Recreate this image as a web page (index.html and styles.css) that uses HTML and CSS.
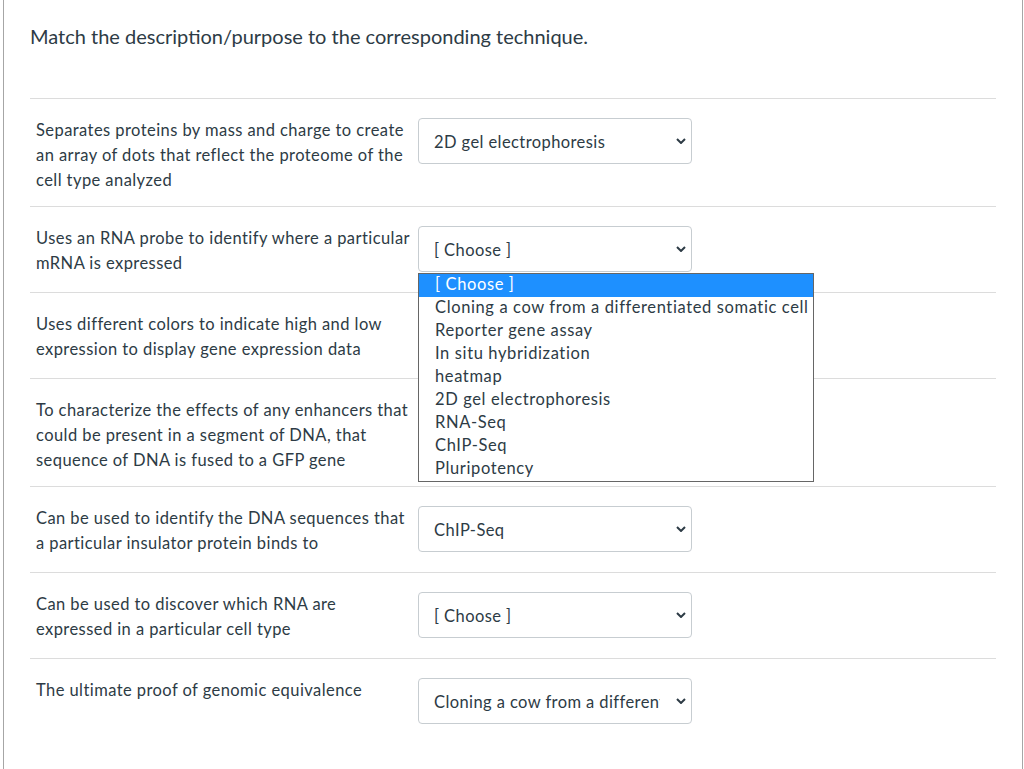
FILE: index.html
```html
<!DOCTYPE html>
<html lang="en">
<head>
<meta charset="utf-8">
<title>Matching question</title>
<link rel="stylesheet" href="styles.css">
</head>
<body>
<div class="page">
  <div class="question-text">Match the description/purpose to the corresponding technique.</div>
  <div class="answers">
    <div class="answer">
      <div class="answer-label">Separates proteins by mass and charge to create an array of dots that reflect the proteome of the cell type analyzed</div>
      <div class="select-wrap">
        <div class="select"><span class="select-value">2D gel electrophoresis</span><svg class="chevron" width="10" height="6" viewBox="0 0 10 6"><path d="M1 1 L5 5 L9 1" fill="none" stroke="#2d3b45" stroke-width="2"/></svg></div>
      </div>
    </div>
    <div class="answer">
      <div class="answer-label">Uses an RNA probe to identify where a particular mRNA is expressed</div>
      <div class="select-wrap">
        <div class="select"><span class="select-value">[ Choose ]</span><svg class="chevron" width="10" height="6" viewBox="0 0 10 6"><path d="M1 1 L5 5 L9 1" fill="none" stroke="#2d3b45" stroke-width="2"/></svg></div>
        <div class="listbox">
          <div class="option selected">[ Choose ]</div>
          <div class="option">Cloning a cow from a differentiated somatic cell</div>
          <div class="option">Reporter gene assay</div>
          <div class="option">In situ hybridization</div>
          <div class="option">heatmap</div>
          <div class="option">2D gel electrophoresis</div>
          <div class="option">RNA-Seq</div>
          <div class="option">ChIP-Seq</div>
          <div class="option">Pluripotency</div>
        </div>
      </div>
    </div>
    <div class="answer">
      <div class="answer-label">Uses different colors to indicate high and low expression to display gene expression data</div>
      <div class="select-wrap">
        <div class="select"><span class="select-value"></span><svg class="chevron" width="10" height="6" viewBox="0 0 10 6"><path d="M1 1 L5 5 L9 1" fill="none" stroke="#2d3b45" stroke-width="2"/></svg></div>
      </div>
    </div>
    <div class="answer">
      <div class="answer-label">To characterize the effects of any enhancers that could be present in a segment of DNA, that sequence of DNA is fused to a GFP gene</div>
      <div class="select-wrap">
        <div class="select"><span class="select-value"></span><svg class="chevron" width="10" height="6" viewBox="0 0 10 6"><path d="M1 1 L5 5 L9 1" fill="none" stroke="#2d3b45" stroke-width="2"/></svg></div>
      </div>
    </div>
    <div class="answer">
      <div class="answer-label">Can be used to identify the DNA sequences that a particular insulator protein binds to</div>
      <div class="select-wrap">
        <div class="select"><span class="select-value">ChIP-Seq</span><svg class="chevron" width="10" height="6" viewBox="0 0 10 6"><path d="M1 1 L5 5 L9 1" fill="none" stroke="#2d3b45" stroke-width="2"/></svg></div>
      </div>
    </div>
    <div class="answer">
      <div class="answer-label">Can be used to discover which RNA are expressed in a particular cell type</div>
      <div class="select-wrap">
        <div class="select"><span class="select-value">[ Choose ]</span><svg class="chevron" width="10" height="6" viewBox="0 0 10 6"><path d="M1 1 L5 5 L9 1" fill="none" stroke="#2d3b45" stroke-width="2"/></svg></div>
      </div>
    </div>
    <div class="answer">
      <div class="answer-label">The ultimate proof of genomic equivalence</div>
      <div class="select-wrap">
        <div class="select"><span class="select-value">Cloning a cow from a differentiated somatic cell</span><svg class="chevron" width="10" height="6" viewBox="0 0 10 6"><path d="M1 1 L5 5 L9 1" fill="none" stroke="#2d3b45" stroke-width="2"/></svg></div>
      </div>
    </div>
  </div>
</div>
</body>
</html>
```

FILE: styles.css
```css
html, body {
  margin: 0;
  padding: 0;
  background: #fff;
}

body {
  font-family: Lato, "Open Sans", "Liberation Sans", sans-serif;
  color: #2d3b45;
  font-size: 16.5px;
}

.page {
  margin-left: 3px;
  width: 1020px;
  min-height: 769px;
  box-sizing: border-box;
  border-left: 1px solid #a6a6a6;
  border-right: 1px solid #a6a6a6;
  padding: 24px 26px 0 26px;
}

.question-text {
  font-size: 20px;
  line-height: 24px;
  margin-bottom: 50px;
}

.answer {
  display: flex;
  align-items: flex-start;
  border-top: 1px solid #dcdcdc;
  padding: 18px 0 14px;
}

.answer-label {
  flex: 0 0 auto;
  width: 378px;
  padding: 0 4px 0 6px;
  margin: 1px 0 -1px;
  line-height: 25px;
  letter-spacing: 0.43px;
}

.select-wrap {
  position: relative;
  margin: 1px 0 6px;
}

.select {
  width: 274px;
  height: 46px;
  box-sizing: border-box;
  border: 1px solid #c7cdd1;
  border-radius: 4px;
  background: #fff;
  display: flex;
  align-items: center;
  padding: 0 5px 0 15px;
}

.select-value {
  flex: 1 1 auto;
  overflow: hidden;
  white-space: nowrap;
  margin-right: 16px;
  letter-spacing: 0.41px;
  line-height: 22px;
  padding-top: 1px;
  min-height: 22px;
}

.chevron {
  flex: 0 0 auto;
  display: block;
}

.listbox {
  position: absolute;
  top: 47px;
  left: 0;
  width: 396px;
  box-sizing: border-box;
  border: 1px solid #666;
  background: #fff;
  z-index: 2;
}

.option {
  height: 23px;
  box-sizing: border-box;
  line-height: 21px;
  padding: 0 0 2px 16px;
  white-space: nowrap;
  letter-spacing: 0.62px;
  color: #2d3b45;
}

.option.selected {
  background: #1e90ff;
  color: #fff;
}
```
